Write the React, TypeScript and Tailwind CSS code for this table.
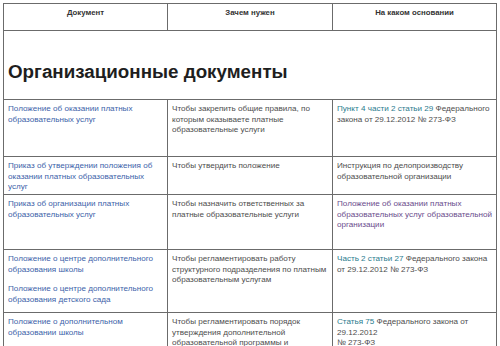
import React from 'react'

const link = 'text-[#3d5fa9]'
const teal = 'text-[#2b7c8e]'
const visited = 'text-[#6a4c8c]'
const plain = 'text-[#4d4d4d]'

const cell = 'border border-[#6b6b6b] align-top px-[4px] pt-[4px] text-[8.1px] leading-[10.5px] whitespace-nowrap'
const head = 'border border-[#6b6b6b] align-top pt-[4px] text-[7.8px] leading-[10px] font-bold text-[#333]'

function Lines({ lines }: { lines: React.ReactNode[] }) {
    return (
        <>
            {lines.map((l, i) => (
                <span key={i} className="block">{l}</span>
            ))}
        </>
    )
}

export default function App() {
    return (
        <div className="w-[500px] h-[346px] overflow-hidden bg-white" style={{ fontFamily: '"Liberation Sans", Arial, sans-serif' }}>
            <table className="ml-[3px] mt-[3px] w-[493px] table-fixed border-collapse">
                <colgroup>
                    <col className="w-[164px]" />
                    <col className="w-[165px]" />
                    <col className="w-[164px]" />
                </colgroup>
                <tbody>
                    <tr className="h-[27px]">
                        <th className={head}>Документ</th>
                        <th className={head}>Зачем нужен</th>
                        <th className={head}>На каком основании</th>
                    </tr>
                    <tr className="h-[69px]">
                        <td colSpan={3} className="border border-[#6b6b6b] align-top pl-[4px] pt-[29px]">
                            <h2 className="text-[18.8px] leading-[23px] font-bold text-[#1e1e1e]">Организационные документы</h2>
                        </td>
                    </tr>
                    <tr className="h-[57px]">
                        <td className={`${cell} ${link}`}>
                            <Lines lines={['Положение об оказании платных', 'образовательных услуг']} />
                        </td>
                        <td className={`${cell} ${plain}`}>
                            <Lines lines={['Чтобы закрепить общие правила, по', 'которым оказываете платные', 'образовательные услуги']} />
                        </td>
                        <td className={`${cell} ${plain}`}>
                            <Lines
                                lines={[
                                    <><span className={teal}>Пункт 4 части 2 статьи 29</span> Федерального</>,
                                    'закона от 29.12.2012 № 273-ФЗ',
                                ]}
                            />
                        </td>
                    </tr>
                    <tr className="h-[38px]">
                        <td className={`${cell} ${link}`}>
                            <Lines lines={['Приказ об утверждении положения об', 'оказании платных образовательных', 'услуг']} />
                        </td>
                        <td className={`${cell} ${plain}`}>Чтобы утвердить положение</td>
                        <td className={`${cell} ${plain}`}>
                            <Lines lines={['Инструкция по делопроизводству', 'образовательной организации']} />
                        </td>
                    </tr>
                    <tr className="h-[55px]">
                        <td className={`${cell} ${link}`}>
                            <Lines lines={['Приказ об организации платных', 'образовательных услуг']} />
                        </td>
                        <td className={`${cell} ${plain}`}>
                            <Lines lines={['Чтобы назначить ответственных за', 'платные образовательные услуги']} />
                        </td>
                        <td className={`${cell} ${visited}`}>
                            <Lines lines={['Положение об оказании платных', 'образовательных услуг образовательной', 'организации']} />
                        </td>
                    </tr>
                    <tr className="h-[63px]">
                        <td className={`${cell} ${link}`}>
                            <Lines lines={['Положение о центре дополнительного', 'образования школы']} />
                            <div className="mt-[9px]">
                                <Lines lines={['Положение о центре дополнительного', 'образования детского сада']} />
                            </div>
                        </td>
                        <td className={`${cell} ${plain}`}>
                            <Lines lines={['Чтобы регламентировать работу', 'структурного подразделения по платным', 'образовательным услугам']} />
                        </td>
                        <td className={`${cell} ${plain}`}>
                            <Lines
                                lines={[
                                    <><span className={teal}>Часть 2 статьи 27</span> Федерального закона</>,
                                    'от 29.12.2012 № 273-ФЗ',
                                ]}
                            />
                        </td>
                    </tr>
                    <tr className="h-[60px]">
                        <td className={`${cell} ${link}`}>
                            <Lines lines={['Положение о дополнительном', 'образовании школы']} />
                        </td>
                        <td className={`${cell} ${plain}`}>
                            <Lines lines={['Чтобы регламентировать порядок', 'утверждения дополнительной', 'образовательной программы и']} />
                        </td>
                        <td className={`${cell} ${plain}`}>
                            <Lines
                                lines={[
                                    <><span className={teal}>Статья 75</span> Федерального закона от</>,
                                    '29.12.2012',
                                    '№ 273-ФЗ',
                                ]}
                            />
                        </td>
                    </tr>
                </tbody>
            </table>
        </div>
    )
}
